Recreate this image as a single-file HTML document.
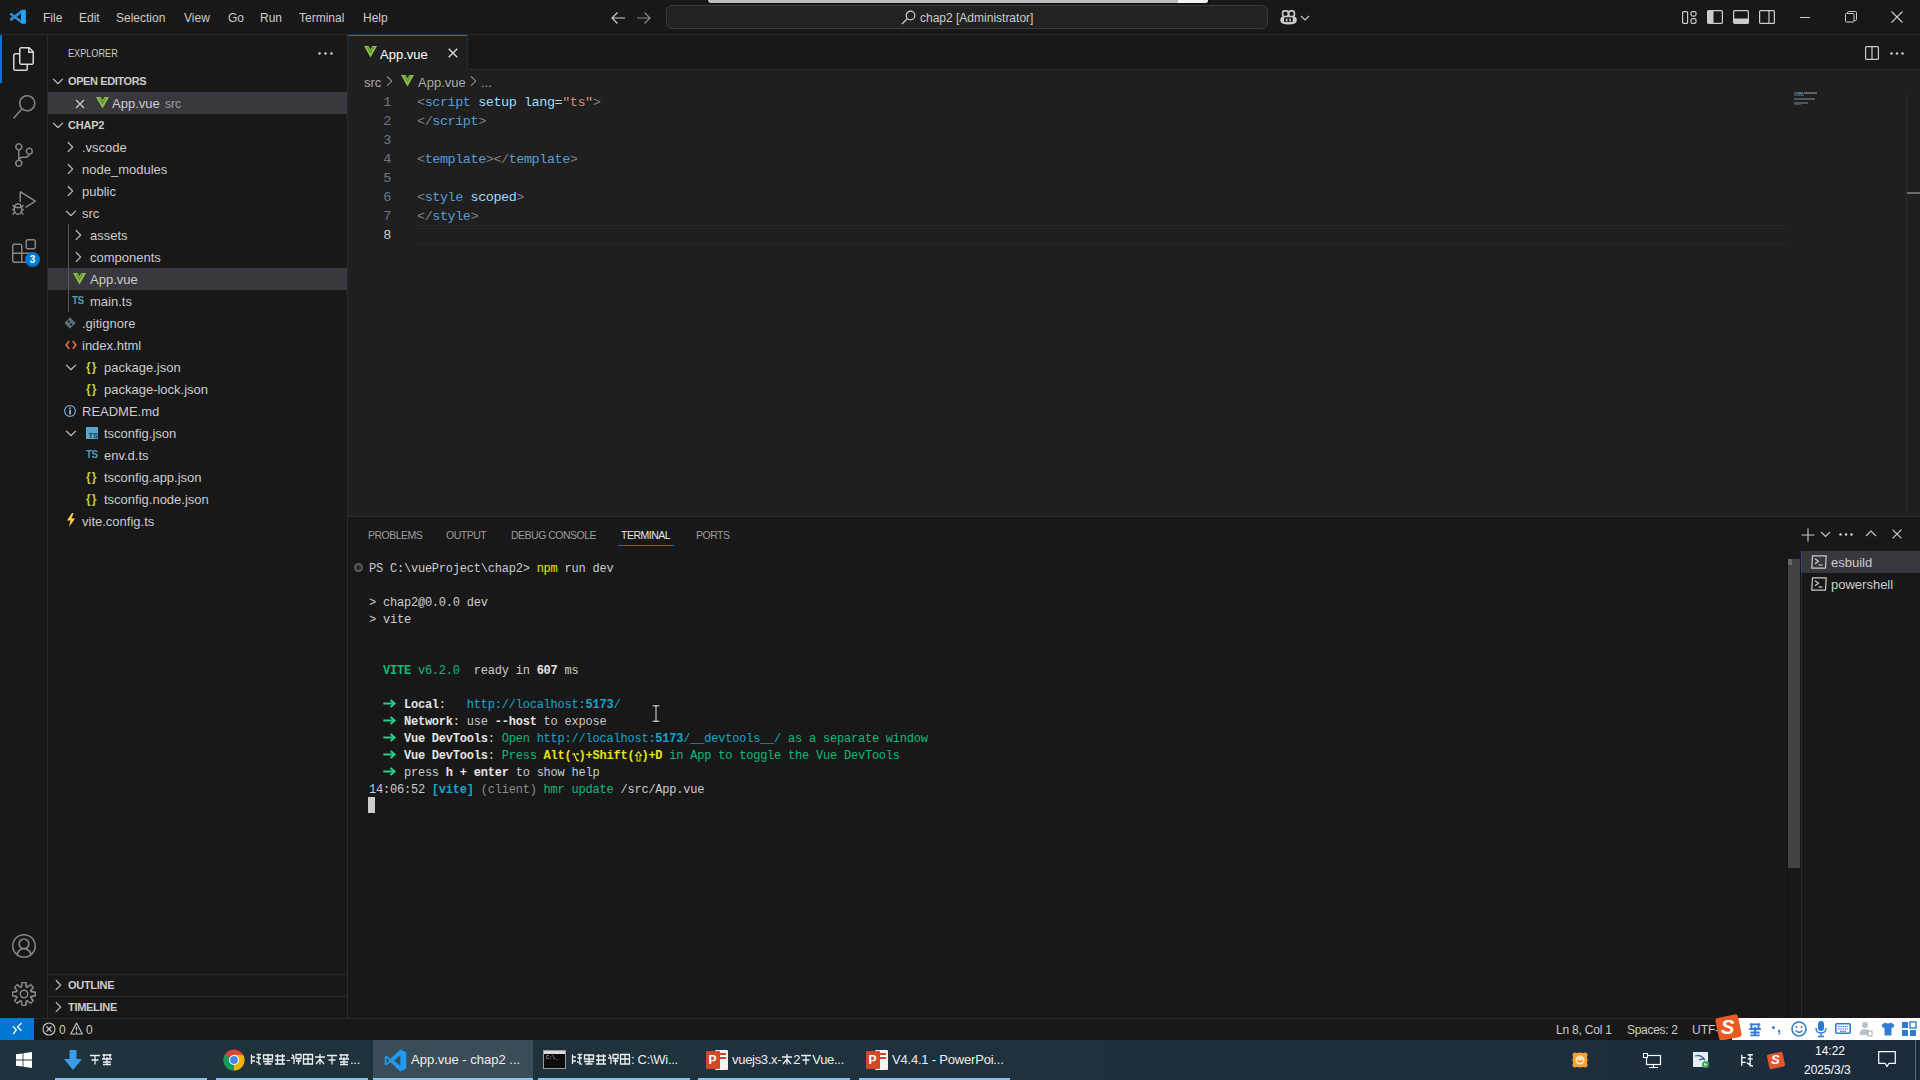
<!DOCTYPE html>
<html><head><meta charset="utf-8">
<style>
*{margin:0;padding:0;box-sizing:border-box}
html,body{width:1920px;height:1080px;overflow:hidden;background:#181818}
body{position:relative;font-family:"Liberation Sans",sans-serif;font-size:13px;color:#cccccc}
.a{position:absolute}
.t{position:absolute;white-space:nowrap;line-height:1}
.mono{font-family:"Liberation Mono",monospace}
svg{position:absolute;overflow:visible}
i.k{display:inline-block;width:6.99px;font-style:normal}
i.m{display:inline-block;width:7.65px;font-style:normal}
</style></head><body>

<!-- TITLE BAR -->
<div class="a" style="left:0;top:0;width:1920px;height:34px;background:#181818"></div>
<div class="a" style="left:0;top:34px;width:1920px;height:1px;background:#2b2b2b"></div>


<!-- vscode logo -->
<svg style="left:0;top:0" width="30" height="30" viewBox="0 0 30 30">
<path d="M22.5 10.8 L11.2 19.4" stroke="#2a8fd8" stroke-width="2.6" stroke-linecap="round"/>
<path d="M22.5 22.8 L11.2 14.2" stroke="#2a8fd8" stroke-width="2.6" stroke-linecap="round"/>
<path d="M21 11 L24.5 9.6 Q25.9 9.8 25.9 11 V22.6 Q25.9 23.9 24.5 24 L21 22.6 Z" fill="#1fa5f8"/>
</svg>
<div class="t" style="left:43px;top:12px;font-size:12px;color:#cccccc">File</div>
<div class="t" style="left:79px;top:12px;font-size:12px;color:#cccccc">Edit</div>
<div class="t" style="left:116px;top:12px;font-size:12px;color:#cccccc">Selection</div>
<div class="t" style="left:184px;top:12px;font-size:12px;color:#cccccc">View</div>
<div class="t" style="left:228px;top:12px;font-size:12px;color:#cccccc">Go</div>
<div class="t" style="left:260px;top:12px;font-size:12px;color:#cccccc">Run</div>
<div class="t" style="left:299px;top:12px;font-size:12px;color:#cccccc">Terminal</div>
<div class="t" style="left:363px;top:12px;font-size:12px;color:#cccccc">Help</div>
<!-- nav arrows -->
<svg style="left:610px;top:11px" width="16" height="14" viewBox="0 0 16 14"><path d="M15 7 H2 M7.5 1.5 L2 7 L7.5 12.5" stroke="#cccccc" stroke-width="1.2" fill="none"/></svg>
<svg style="left:636px;top:11px" width="16" height="14" viewBox="0 0 16 14"><path d="M1 7 H14 M8.5 1.5 L14 7 L8.5 12.5" stroke="#8a8a8a" stroke-width="1.2" fill="none"/></svg>
<!-- command center -->
<div class="a" style="left:666px;top:5px;width:602px;height:24px;background:#222222;border:1px solid #3a3a3a;border-radius:6px"></div>
<svg style="left:901px;top:10px" width="15" height="15" viewBox="0 0 15 15"><circle cx="9.5" cy="5.5" r="4.3" stroke="#cccccc" stroke-width="1.2" fill="none"/><path d="M6.5 8.5 L1 14" stroke="#cccccc" stroke-width="1.3"/></svg>
<div class="t" style="left:920px;top:12px;font-size:12px;color:#cccccc">chap2 [Administrator]</div>
<!-- white bar at top -->
<div class="a" style="left:706px;top:0;width:504px;height:4px;background:#111;border-radius:0 0 5px 5px"></div>
<div class="a" style="left:708px;top:0;width:500px;height:2.5px;background:#bdbdbd;border-radius:0 0 4px 4px"></div>
<div class="a" style="left:1178px;top:0;width:30px;height:2.5px;background:#f2f2f2;border-radius:0 0 4px 0"></div>
<!-- copilot -->
<svg style="left:1280px;top:9.6px" width="17" height="15" viewBox="0 0 17 15">
<path d="M0.3 10.2 Q0.3 6.3 4 6.3 H13 Q16.8 6.3 16.8 10.2 Q16.8 14.6 8.5 14.6 Q0.3 14.6 0.3 10.2 Z" fill="#cccccc"/>
<rect x="2.6" y="0.9" width="5.6" height="5.6" rx="2" stroke="#cccccc" stroke-width="1.6" fill="#181818"/>
<rect x="8.8" y="0.9" width="5.6" height="5.6" rx="2" stroke="#cccccc" stroke-width="1.6" fill="#181818"/>
<rect x="4" y="7.2" width="8.8" height="4.9" rx="1.2" fill="#181818"/>
<rect x="5.9" y="8.6" width="1.6" height="2.8" fill="#cccccc"/><rect x="9.2" y="8.6" width="1.6" height="2.8" fill="#cccccc"/>
</svg>
<svg style="left:1300px;top:14.5px" width="10" height="6" viewBox="0 0 10 6"><path d="M1 1 L5 5 L9 1" stroke="#cccccc" stroke-width="1.1" fill="none"/></svg>
<!-- layout icons -->
<svg style="left:1682px;top:11px" width="15" height="13" viewBox="0 0 15 13"><rect x="0.6" y="0.6" width="5" height="11.8" rx="1" stroke="#cccccc" stroke-width="1.2" fill="none"/><rect x="9" y="0.6" width="5" height="4.5" rx="1.5" stroke="#cccccc" stroke-width="1.2" fill="none"/><rect x="9" y="7.7" width="5" height="4.7" rx="1.5" stroke="#cccccc" stroke-width="1.2" fill="none"/></svg>
<svg style="left:1707px;top:10px" width="16" height="14" viewBox="0 0 16 14"><rect x="0.6" y="0.6" width="14.8" height="12.8" rx="1" stroke="#cccccc" stroke-width="1.2" fill="none"/><rect x="1" y="1" width="5.5" height="12" fill="#cccccc"/></svg>
<svg style="left:1733px;top:10px" width="16" height="14" viewBox="0 0 16 14"><rect x="0.6" y="0.6" width="14.8" height="12.8" rx="1" stroke="#cccccc" stroke-width="1.2" fill="none"/><rect x="1" y="8.5" width="14" height="4.5" fill="#cccccc"/></svg>
<svg style="left:1759px;top:10px" width="16" height="14" viewBox="0 0 16 14"><rect x="0.6" y="0.6" width="14.8" height="12.8" rx="1" stroke="#cccccc" stroke-width="1.2" fill="none"/><path d="M10 1 V13" stroke="#cccccc" stroke-width="1.2"/></svg>
<!-- window controls -->
<div class="a" style="left:1800px;top:17px;width:10px;height:1px;background:#cccccc"></div>
<svg style="left:1845px;top:11px" width="12" height="12" viewBox="0 0 12 12"><rect x="0.5" y="2.5" width="8.5" height="8.5" rx="1" stroke="#cccccc" stroke-width="1" fill="none"/><path d="M2.5 2.5 V1.5 Q2.5 0.5 3.5 0.5 H10.5 Q11.5 0.5 11.5 1.5 V8.5 Q11.5 9.5 10.5 9.5 H9" stroke="#cccccc" stroke-width="1" fill="none"/></svg>
<svg style="left:1891px;top:11px" width="12" height="12" viewBox="0 0 12 12"><path d="M0.5 0.5 L11.5 11.5 M11.5 0.5 L0.5 11.5" stroke="#cccccc" stroke-width="1.1"/></svg>

<!-- ACTIVITY BAR -->
<div class="a" style="left:0;top:35px;width:47px;height:983px;background:#181818"></div>
<div class="a" style="left:47px;top:35px;width:1px;height:983px;background:#2b2b2b"></div>


<div class="a" style="left:0;top:35px;width:2px;height:48px;background:#0078d4"></div>
<svg style="left:12px;top:47px" width="24" height="24" viewBox="0 0 24 24"><path fill="#d7d7d7" d="M17.5 0h-9L7 1.5V6H2.5L1 7.5v15.07L2.5 24h12.07L16 22.57V18h4.7l1.3-1.43V4.5L17.5 0zm0 2.12l2.38 2.38H17.5V2.12zm-3 20.38h-12v-15H7v9.07L8.5 18h6v4.5zm6-6h-12v-15H16V6h4.5v10.5z"/></svg>
<svg style="left:12px;top:95px" width="24" height="24" viewBox="0 0 24 24"><path fill="#868686" d="M15.25 0a8.25 8.25 0 0 0-6.18 13.72L1 22.88l1.12 1 8.05-9.12A8.251 8.251 0 1 0 15.25.01V0zm0 15a6.750 6.75 0 1 1 0-13.5 6.75 6.75 0 0 1 0 13.5z"/></svg>
<svg style="left:12px;top:143px" width="24" height="24" viewBox="0 0 24 24"><path fill="#868686" d="M21.007 8.222A3.738 3.738 0 0 0 15.045 5.2a3.737 3.737 0 0 0 1.156 6.583 2.988 2.988 0 0 1-2.668 1.67h-2.99a4.456 4.456 0 0 0-2.989 1.165V7.4a3.737 3.737 0 1 0-1.494 0v9.117a3.776 3.776 0 1 0 1.816.099 2.99 2.99 0 0 1 2.668-1.667h2.99a4.484 4.484 0 0 0 4.223-3.039 3.736 3.736 0 0 0 3.25-3.687zM4.565 3.738a2.242 2.242 0 1 1 4.484 0 2.242 2.242 0 0 1-4.484 0zm4.484 16.441a2.242 2.242 0 1 1-4.484 0 2.242 2.242 0 0 1 4.484 0zm8.221-9.715a2.242 2.242 0 1 1 0-4.485 2.242 2.242 0 0 1 0 4.485z"/></svg>
<svg style="left:12px;top:191px" width="24" height="24" viewBox="0 0 24 24"><path fill="#868686" d="M10.94 13.5l-1.32 1.320a3.730 3.73 0 0 0-7.24 0L1.06 13.5 0 14.56l1.72 1.72-.22.22V18H0v1.5h1.5v.08c.077.489.214.966.41 1.42L0 22.94 1.060 24l1.65-1.65A4.308 4.308 0 0 0 6 24a4.31 4.31 0 0 0 3.29-1.65L10.94 24 12 22.94 10.09 21c.198-.464.336-.951.41-1.45v-.07H12V18h-1.5v-1.5l-.22-.22L12 14.56l-1.06-1.060zM6 13.5a2.25 2.25 0 0 1 2.25 2.25h-4.5A2.25 2.25 0 0 1 6 13.5zm3 6a3.33 3.33 0 0 1-3 3 3.33 3.33 0 0 1-3-3v-2.25h6v2.25zm14.76-9.9v1.26L13.5 17.37V15.6l8.5-5.37L9 2v9.46a5.07 5.07 0 0 0-1.5-.72V.63L8.64 0l15.12 9.6z"/></svg>
<svg style="left:12px;top:239px" width="24" height="24" viewBox="0 0 24 24"><path fill="#868686" d="M13.5 1.5L15 0h7.5L24 1.5V9l-1.5 1.5H15L13.5 9V1.5zm1.5 0V9h7.5V1.5H15zM0 15V6l1.5-1.5H9L10.5 6v7.5H18l1.5 1.5v7.5L18 24H1.5L0 22.5V15zm9-1.5V6H1.5v7.5H9zM9 15H1.5v7.5H9V15zm1.5 7.5H18V15h-7.5v7.5z"/></svg>
<div class="a" style="left:25px;top:252px;width:15px;height:15px;border-radius:50%;background:#0078d4"></div>
<div class="t" style="left:25px;top:255px;width:15px;text-align:center;font-size:10px;font-weight:bold;color:#fff">3</div>
<svg style="left:12px;top:934px" width="24" height="24" viewBox="0 0 16 16"><path fill="#868686" d="M16 7.992C16 3.58 12.416 0 8 0S0 3.58 0 7.992c0 2.43 1.104 4.62 2.832 6.09.016.016.032.016.032.032.144.112.288.224.448.336.08.048.144.111.224.175A7.98 7.98 0 0 0 8.016 16a7.98 7.98 0 0 0 4.48-1.375c.08-.048.144-.111.224-.16.144-.111.304-.223.448-.335.016-.016.032-.016.032-.032 1.696-1.487 2.8-3.676 2.8-6.106zm-8 7.001c-1.504 0-2.88-.48-4.016-1.279.016-.128.048-.255.08-.383a4.170 4.17 0 0 1 .416-.991c.176-.304.384-.576.64-.816.24-.24.528-.463.816-.639.304-.176.624-.304.976-.4A4.15 4.15 0 0 1 8 10.342a4.185 4.185 0 0 1 2.928 1.166c.368.368.656.8.864 1.295.112.288.192.592.24.911A7.03 7.03 0 0 1 8 14.993zm-2.448-7.4a2.49 2.49 0 0 1-.208-1.024c0-.351.064-.703.208-1.023.144-.32.336-.607.576-.847.24-.24.528-.431.848-.575.32-.144.672-.208 1.024-.208.368 0 .704.064 1.024.208.32.144.608.336.848.575.24.24.432.528.576.847.144.32.208.672.208 1.023 0 .368-.064.704-.208 1.023a2.84 2.84 0 0 1-.576.848 2.84 2.84 0 0 1-.848.575 2.715 2.715 0 0 1-2.064 0 2.84 2.84 0 0 1-.848-.575 2.526 2.526 0 0 1-.56-.848zm7.424 5.306c0-.032-.016-.048-.016-.08a5.22 5.22 0 0 0-.688-1.406 4.883 4.883 0 0 0-1.088-1.135 5.207 5.207 0 0 0-1.04-.608 2.82 2.82 0 0 0 .464-.383 4.2 4.2 0 0 0 .624-.784 3.624 3.624 0 0 0 .528-1.934 3.71 3.71 0 0 0-.288-1.47 3.799 3.799 0 0 0-.816-1.199 3.845 3.845 0 0 0-1.2-.8 3.72 3.72 0 0 0-1.472-.287 3.72 3.72 0 0 0-1.472.288 3.631 3.631 0 0 0-1.2.815 3.84 3.84 0 0 0-.8 1.199 3.71 3.71 0 0 0-.288 1.47c0 .352.048.688.144 1.007.096.336.224.64.4.927.16.288.384.544.624.784.144.144.304.271.48.383a5.12 5.12 0 0 0-1.04.624c-.416.32-.784.703-1.088 1.119a4.999 4.999 0 0 0-.688 1.406c-.016.032-.016.064-.016.08C1.776 11.636.992 9.91.992 7.992.992 4.14 4.144.991 8 .991s7.008 3.149 7.008 7.001a6.96 6.960 0 0 1-2.032 4.907z"/></svg>
<svg style="left:12px;top:982px" width="24" height="24" viewBox="0 0 24 24"><path fill="#868686" d="M19.85 8.75l4.15.83v4.84l-4.15.83 2.35 3.52-3.43 3.43-3.520-2.35-.83 4.150H9.58l-.83-4.15-3.52 2.35-3.43-3.43 2.35-3.52L0 14.42V9.58l4.15-.83L1.8 5.23 5.23 1.8l3.52 2.35L9.58 0h4.84l.83 4.15 3.52-2.35 3.43 3.43-2.35 3.52zm-1.57 5.07l4.22-.84v-1.96l-4.22-.84-.6-1.46 2.39-3.58-1.38-1.39-3.59 2.39-1.46-.6-.84-4.22h-1.96l-.84 4.22-1.46.6-3.58-2.39-1.39 1.39 2.39 3.58-.6 1.46-4.22.84v1.96l4.22.84.6 1.46-2.39 3.58 1.39 1.39 3.58-2.39 1.46.6.84 4.22h1.96l.84-4.22 1.46-.6 3.58 2.39 1.39-1.39-2.39-3.58.6-1.46zM12 7.5a4.5 4.5 0 1 1 0 9 4.5 4.5 0 0 1 0-9zm0 1.5a3 3 0 1 0 0 6 3 3 0 0 0 0-6z"/></svg>

<!-- SIDEBAR -->
<div class="a" style="left:48px;top:35px;width:299px;height:983px;background:#181818"></div>
<div class="a" style="left:347px;top:35px;width:1px;height:983px;background:#2b2b2b"></div>

<div class="t" style="left:68px;top:48px;font-size:11px;color:#cccccc;transform:scaleX(0.83);transform-origin:0 0">EXPLORER</div>
<svg style="left:318px;top:52px" width="15" height="3" viewBox="0 0 15 3"><circle cx="1.5" cy="1.5" r="1.3" fill="#cccccc"/><circle cx="7.5" cy="1.5" r="1.3" fill="#cccccc"/><circle cx="13.5" cy="1.5" r="1.3" fill="#cccccc"/></svg>
<svg style="left:50.0px;top:72.7px" width="16" height="16" viewBox="0 0 16 16"><path fill="#c5c5c5" stroke="#c5c5c5" stroke-width="0.45" d="M7.976 10.072l4.357-4.357.62.618L8.284 11h-.618L3 6.333l.619-.618 4.357 4.357z"/></svg>
<div class="t" style="left:68px;top:76px;font-size:11px;font-weight:bold;color:#cccccc;letter-spacing:-0.4px">OPEN EDITORS</div>
<div class="a" style="left:48px;top:92px;width:299px;height:22px;background:#37373d"></div>
<svg style="left:75px;top:98.5px" width="10" height="10" viewBox="0 0 10 10"><path d="M1 1 L9 9 M9 1 L1 9" stroke="#cccccc" stroke-width="1.2"/></svg>
<svg style="left:96px;top:97px" width="13" height="12" viewBox="0 0 13 12"><path d="M0 0 H4.6 L6.5 3.2 L8.4 0 H13 L6.5 11.5 Z" fill="#8dc149"/><path d="M2.6 0.9 H4.1 L6.5 5 L8.9 0.9 H10.4 L6.5 7.8 Z" fill="#5e8f2c"/></svg>
<div class="t" style="left:112px;top:97px;font-size:13px;color:#cccccc;">App.vue</div>
<div class="t" style="left:165px;top:97px;font-size:12px;color:#a0a0a0;top:98px">src</div>
<svg style="left:50.0px;top:116.7px" width="16" height="16" viewBox="0 0 16 16"><path fill="#c5c5c5" stroke="#c5c5c5" stroke-width="0.45" d="M7.976 10.072l4.357-4.357.62.618L8.284 11h-.618L3 6.333l.619-.618 4.357 4.357z"/></svg>
<div class="t" style="left:68px;top:120px;font-size:11px;font-weight:bold;color:#cccccc;letter-spacing:-0.2px">CHAP2</div>
<svg style="left:61.8px;top:139.0px" width="16" height="16" viewBox="0 0 16 16"><path fill="#c5c5c5" stroke="#c5c5c5" stroke-width="0.45" d="M10.072 8.024L5.715 3.667l.618-.62L11 7.716v.618L6.333 13l-.618-.619 4.357-4.357z"/></svg>
<div class="t" style="left:82px;top:141px;font-size:13px;color:#cccccc;">.vscode</div>
<svg style="left:61.8px;top:161.0px" width="16" height="16" viewBox="0 0 16 16"><path fill="#c5c5c5" stroke="#c5c5c5" stroke-width="0.45" d="M10.072 8.024L5.715 3.667l.618-.62L11 7.716v.618L6.333 13l-.618-.619 4.357-4.357z"/></svg>
<div class="t" style="left:82px;top:163px;font-size:13px;color:#cccccc;">node_modules</div>
<svg style="left:61.8px;top:183.0px" width="16" height="16" viewBox="0 0 16 16"><path fill="#c5c5c5" stroke="#c5c5c5" stroke-width="0.45" d="M10.072 8.024L5.715 3.667l.618-.62L11 7.716v.618L6.333 13l-.618-.619 4.357-4.357z"/></svg>
<div class="t" style="left:82px;top:185px;font-size:13px;color:#cccccc;">public</div>
<svg style="left:63.0px;top:204.7px" width="16" height="16" viewBox="0 0 16 16"><path fill="#c5c5c5" stroke="#c5c5c5" stroke-width="0.45" d="M7.976 10.072l4.357-4.357.62.618L8.284 11h-.618L3 6.333l.619-.618 4.357 4.357z"/></svg>
<div class="t" style="left:82px;top:207px;font-size:13px;color:#cccccc;">src</div>
<div class="a" style="left:68px;top:224px;width:1px;height:88px;background:#585858"></div>
<svg style="left:70.3px;top:227.0px" width="16" height="16" viewBox="0 0 16 16"><path fill="#c5c5c5" stroke="#c5c5c5" stroke-width="0.45" d="M10.072 8.024L5.715 3.667l.618-.62L11 7.716v.618L6.333 13l-.618-.619 4.357-4.357z"/></svg>
<div class="t" style="left:90px;top:229px;font-size:13px;color:#cccccc;">assets</div>
<svg style="left:70.3px;top:249.0px" width="16" height="16" viewBox="0 0 16 16"><path fill="#c5c5c5" stroke="#c5c5c5" stroke-width="0.45" d="M10.072 8.024L5.715 3.667l.618-.62L11 7.716v.618L6.333 13l-.618-.619 4.357-4.357z"/></svg>
<div class="t" style="left:90px;top:251px;font-size:13px;color:#cccccc;">components</div>
<div class="a" style="left:48px;top:268px;width:299px;height:22px;background:#37373d"></div>
<div class="a" style="left:68px;top:268px;width:1px;height:22px;background:#585858"></div>
<svg style="left:73px;top:273px" width="13" height="12" viewBox="0 0 13 12"><path d="M0 0 H4.6 L6.5 3.2 L8.4 0 H13 L6.5 11.5 Z" fill="#8dc149"/><path d="M2.6 0.9 H4.1 L6.5 5 L8.9 0.9 H10.4 L6.5 7.8 Z" fill="#5e8f2c"/></svg>
<div class="t" style="left:90px;top:273px;font-size:13px;color:#cccccc;">App.vue</div>
<div class="t" style="left:72px;top:296px;font-size:10px;font-weight:bold;color:#519aba;letter-spacing:-0.5px">TS</div>
<div class="t" style="left:90px;top:295px;font-size:13px;color:#cccccc;">main.ts</div>
<svg style="left:64px;top:317px" width="12" height="12" viewBox="0 0 12 12"><path d="M6 0.3 L11.7 6 L6 11.7 L0.3 6 Z" fill="#5d6f78"/><circle cx="4.8" cy="4.6" r="1.1" fill="#181818"/><circle cx="7.2" cy="7.4" r="1.1" fill="#181818"/></svg>
<div class="t" style="left:82px;top:317px;font-size:13px;color:#cccccc;">.gitignore</div>
<svg style="left:65px;top:339.5px" width="12" height="10" viewBox="0 0 12 10"><path d="M4.2 1 L1.2 5 L4.2 9 M7.8 1 L10.8 5 L7.8 9" stroke="#e8623e" stroke-width="1.8" fill="none"/></svg>
<div class="t" style="left:82px;top:339px;font-size:13px;color:#cccccc;">index.html</div>
<svg style="left:63.0px;top:358.6px" width="16" height="16" viewBox="0 0 16 16"><path fill="#c5c5c5" stroke="#c5c5c5" stroke-width="0.45" d="M7.976 10.072l4.357-4.357.62.618L8.284 11h-.618L3 6.333l.619-.618 4.357 4.357z"/></svg>
<div class="t" style="left:86px;top:361px;font-size:12px;font-weight:bold;color:#cbcb41;letter-spacing:1px">{}</div>
<div class="t" style="left:104px;top:361px;font-size:13px;color:#cccccc;">package.json</div>
<div class="t" style="left:86px;top:383px;font-size:12px;font-weight:bold;color:#cbcb41;letter-spacing:1px">{}</div>
<div class="t" style="left:104px;top:383px;font-size:13px;color:#cccccc;">package-lock.json</div>
<svg style="left:64px;top:405px" width="12" height="12" viewBox="0 0 12 12"><circle cx="6" cy="6" r="5.4" stroke="#7aa8cc" stroke-width="1.2" fill="none"/><rect x="5" y="4.8" width="2" height="4.6" fill="#7aa8cc"/><circle cx="6" cy="3.2" r="1" fill="#7aa8cc"/></svg>
<div class="t" style="left:82px;top:405px;font-size:13px;color:#cccccc;">README.md</div>
<svg style="left:63.0px;top:424.6px" width="16" height="16" viewBox="0 0 16 16"><path fill="#c5c5c5" stroke="#c5c5c5" stroke-width="0.45" d="M7.976 10.072l4.357-4.357.62.618L8.284 11h-.618L3 6.333l.619-.618 4.357 4.357z"/></svg>
<div class="a" style="left:86px;top:427px;width:12px;height:12px;background:#5aa3cc"></div><div class="t" style="left:88.5px;top:431.5px;font-size:7.5px;font-weight:bold;color:#15364c">TS</div>
<div class="t" style="left:104px;top:427px;font-size:13px;color:#cccccc;">tsconfig.json</div>
<div class="t" style="left:86px;top:450px;font-size:10px;font-weight:bold;color:#519aba;letter-spacing:-0.5px">TS</div>
<div class="t" style="left:104px;top:449px;font-size:13px;color:#cccccc;">env.d.ts</div>
<div class="t" style="left:86px;top:471px;font-size:12px;font-weight:bold;color:#cbcb41;letter-spacing:1px">{}</div>
<div class="t" style="left:104px;top:471px;font-size:13px;color:#cccccc;">tsconfig.app.json</div>
<div class="t" style="left:86px;top:493px;font-size:12px;font-weight:bold;color:#cbcb41;letter-spacing:1px">{}</div>
<div class="t" style="left:104px;top:493px;font-size:13px;color:#cccccc;">tsconfig.node.json</div>
<svg style="left:66px;top:513px" width="10" height="14" viewBox="0 0 10 14"><path d="M6 0 L1 7.5 H4.5 L3 14 L9 5.5 H5.5 L7.5 0 Z" fill="#ffd62e"/></svg>
<div class="t" style="left:82px;top:515px;font-size:13px;color:#cccccc;">vite.config.ts</div>
<div class="a" style="left:48px;top:974px;width:299px;height:1px;background:#2b2b2b"></div>
<svg style="left:49.8px;top:977.0px" width="16" height="16" viewBox="0 0 16 16"><path fill="#c5c5c5" stroke="#c5c5c5" stroke-width="0.45" d="M10.072 8.024L5.715 3.667l.618-.62L11 7.716v.618L6.333 13l-.618-.619 4.357-4.357z"/></svg>
<div class="t" style="left:68px;top:980px;font-size:11px;font-weight:bold;color:#cccccc;letter-spacing:-0.3px">OUTLINE</div>
<div class="a" style="left:48px;top:996px;width:299px;height:1px;background:#2b2b2b"></div>
<svg style="left:49.8px;top:999.0px" width="16" height="16" viewBox="0 0 16 16"><path fill="#c5c5c5" stroke="#c5c5c5" stroke-width="0.45" d="M10.072 8.024L5.715 3.667l.618-.62L11 7.716v.618L6.333 13l-.618-.619 4.357-4.357z"/></svg>
<div class="t" style="left:68px;top:1002px;font-size:11px;font-weight:bold;color:#cccccc;letter-spacing:-0.3px">TIMELINE</div>

<!-- EDITOR -->
<div class="a" style="left:348px;top:35px;width:1572px;height:35px;background:#181818"></div>
<div class="a" style="left:348px;top:70px;width:1572px;height:446px;background:#1f1f1f"></div>

<div class="a" style="left:348px;top:35px;width:119px;height:35px;background:#1f1f1f"></div>
<div class="a" style="left:348px;top:35px;width:119px;height:1px;background:#0078d4"></div>
<div class="a" style="left:467px;top:35px;width:1px;height:34px;background:#2b2b2b"></div>
<div class="a" style="left:468px;top:69px;width:1452px;height:1px;background:#2b2b2b"></div>
<svg style="left:364px;top:46px" width="13" height="12" viewBox="0 0 13 12"><path d="M0 0 H4.6 L6.5 3.2 L8.4 0 H13 L6.5 11.5 Z" fill="#8dc149"/><path d="M2.6 0.9 H4.1 L6.5 5 L8.9 0.9 H10.4 L6.5 7.8 Z" fill="#5e8f2c"/></svg>
<div class="t" style="left:380px;top:48px;font-size:13px;color:#ffffff">App.vue</div>
<svg style="left:448px;top:48px" width="10" height="10" viewBox="0 0 10 10"><path d="M0.7 0.7 L9.3 9.3 M9.3 0.7 L0.7 9.3" stroke="#e0e0e0" stroke-width="1.3"/></svg>
<svg style="left:1865px;top:46px" width="14" height="14" viewBox="0 0 14 14"><rect x="0.6" y="0.6" width="12.8" height="12.8" rx="1" stroke="#cccccc" stroke-width="1.2" fill="none"/><path d="M7 1 V13" stroke="#cccccc" stroke-width="1.2"/></svg>
<svg style="left:1890px;top:51.5px" width="14" height="3" viewBox="0 0 14 3"><circle cx="1.5" cy="1.5" r="1.3" fill="#cccccc"/><circle cx="7" cy="1.5" r="1.3" fill="#cccccc"/><circle cx="12.5" cy="1.5" r="1.3" fill="#cccccc"/></svg>
<div class="t" style="left:364px;top:75.5px;font-size:13px;color:#a9a9a9">src</div>
<svg style="left:380.5px;top:73px" width="16" height="16" viewBox="0 0 16 16"><path fill="#a9a9a9" d="M10.072 8.024L5.715 3.667l.618-.62L11 7.716v.618L6.333 13l-.618-.619 4.357-4.357z"/></svg>
<svg style="left:401px;top:75px" width="13" height="12" viewBox="0 0 13 12"><path d="M0 0 H4.6 L6.5 3.2 L8.4 0 H13 L6.5 11.5 Z" fill="#8dc149"/><path d="M2.6 0.9 H4.1 L6.5 5 L8.9 0.9 H10.4 L6.5 7.8 Z" fill="#5e8f2c"/></svg>
<div class="t" style="left:418px;top:75.5px;font-size:13px;color:#a9a9a9">App.vue</div>
<svg style="left:464.5px;top:73px" width="16" height="16" viewBox="0 0 16 16"><path fill="#a9a9a9" d="M10.072 8.024L5.715 3.667l.618-.62L11 7.716v.618L6.333 13l-.618-.619 4.357-4.357z"/></svg>
<div class="t" style="left:481px;top:75.5px;font-size:13px;color:#a9a9a9">...</div>
<div class="a" style="left:416px;top:225px;width:1372px;height:19px;border:1px solid #282828;border-width:1px 0"></div>
<div class="a mono" style="left:360px;top:93px;width:31px;height:19px;line-height:19px;font-size:13.5px;letter-spacing:-0.45px;text-align:right;color:#6e7681;white-space:pre">1</div>
<div class="a mono" style="left:360px;top:112px;width:31px;height:19px;line-height:19px;font-size:13.5px;letter-spacing:-0.45px;text-align:right;color:#6e7681;white-space:pre">2</div>
<div class="a mono" style="left:360px;top:131px;width:31px;height:19px;line-height:19px;font-size:13.5px;letter-spacing:-0.45px;text-align:right;color:#6e7681;white-space:pre">3</div>
<div class="a mono" style="left:360px;top:150px;width:31px;height:19px;line-height:19px;font-size:13.5px;letter-spacing:-0.45px;text-align:right;color:#6e7681;white-space:pre">4</div>
<div class="a mono" style="left:360px;top:169px;width:31px;height:19px;line-height:19px;font-size:13.5px;letter-spacing:-0.45px;text-align:right;color:#6e7681;white-space:pre">5</div>
<div class="a mono" style="left:360px;top:188px;width:31px;height:19px;line-height:19px;font-size:13.5px;letter-spacing:-0.45px;text-align:right;color:#6e7681;white-space:pre">6</div>
<div class="a mono" style="left:360px;top:207px;width:31px;height:19px;line-height:19px;font-size:13.5px;letter-spacing:-0.45px;text-align:right;color:#6e7681;white-space:pre">7</div>
<div class="a mono" style="left:417px;top:93px;height:19px;line-height:19px;font-size:13.5px;color:#cccccc;white-space:pre"><span style="color:#808080"><i class="m">&lt;</i></span><span style="color:#569cd6"><i class="m">s</i><i class="m">c</i><i class="m">r</i><i class="m">i</i><i class="m">p</i><i class="m">t</i></span><span style="color:#cccccc"><i class="m"> </i></span><span style="color:#9cdcfe"><i class="m">s</i><i class="m">e</i><i class="m">t</i><i class="m">u</i><i class="m">p</i></span><span style="color:#cccccc"><i class="m"> </i></span><span style="color:#9cdcfe"><i class="m">l</i><i class="m">a</i><i class="m">n</i><i class="m">g</i></span><span style="color:#cccccc"><i class="m">=</i></span><span style="color:#ce9178"><i class="m">&quot;</i><i class="m">t</i><i class="m">s</i><i class="m">&quot;</i></span><span style="color:#808080"><i class="m">&gt;</i></span></div>
<div class="a mono" style="left:417px;top:112px;height:19px;line-height:19px;font-size:13.5px;color:#cccccc;white-space:pre"><span style="color:#808080"><i class="m">&lt;</i><i class="m">/</i></span><span style="color:#569cd6"><i class="m">s</i><i class="m">c</i><i class="m">r</i><i class="m">i</i><i class="m">p</i><i class="m">t</i></span><span style="color:#808080"><i class="m">&gt;</i></span></div>
<div class="a mono" style="left:417px;top:150px;height:19px;line-height:19px;font-size:13.5px;color:#cccccc;white-space:pre"><span style="color:#808080"><i class="m">&lt;</i></span><span style="color:#569cd6"><i class="m">t</i><i class="m">e</i><i class="m">m</i><i class="m">p</i><i class="m">l</i><i class="m">a</i><i class="m">t</i><i class="m">e</i></span><span style="color:#808080"><i class="m">&gt;</i><i class="m">&lt;</i><i class="m">/</i></span><span style="color:#569cd6"><i class="m">t</i><i class="m">e</i><i class="m">m</i><i class="m">p</i><i class="m">l</i><i class="m">a</i><i class="m">t</i><i class="m">e</i></span><span style="color:#808080"><i class="m">&gt;</i></span></div>
<div class="a mono" style="left:417px;top:188px;height:19px;line-height:19px;font-size:13.5px;color:#cccccc;white-space:pre"><span style="color:#808080"><i class="m">&lt;</i></span><span style="color:#569cd6"><i class="m">s</i><i class="m">t</i><i class="m">y</i><i class="m">l</i><i class="m">e</i></span><span style="color:#cccccc"><i class="m"> </i></span><span style="color:#9cdcfe"><i class="m">s</i><i class="m">c</i><i class="m">o</i><i class="m">p</i><i class="m">e</i><i class="m">d</i></span><span style="color:#808080"><i class="m">&gt;</i></span></div>
<div class="a mono" style="left:417px;top:207px;height:19px;line-height:19px;font-size:13.5px;color:#cccccc;white-space:pre"><span style="color:#808080"><i class="m">&lt;</i><i class="m">/</i></span><span style="color:#569cd6"><i class="m">s</i><i class="m">t</i><i class="m">y</i><i class="m">l</i><i class="m">e</i></span><span style="color:#808080"><i class="m">&gt;</i></span></div>
<div class="a mono" style="left:360px;top:226px;width:31px;height:19px;line-height:19px;font-size:13.5px;letter-spacing:-0.45px;text-align:right;color:#cccccc;white-space:pre">8</div>
<div class="a" style="left:1794px;top:92px;width:4px;height:2px;background:#3f5266"></div>
<div class="a" style="left:1798px;top:92px;width:5px;height:2px;background:#5a6b7c"></div>
<div class="a" style="left:1804px;top:92px;width:13px;height:2px;background:#606468"></div>
<div class="a" style="left:1794px;top:94px;width:10px;height:2px;background:#3c4c5c"></div>
<div class="a" style="left:1794px;top:98px;width:21px;height:2px;background:#4e5862"></div>
<div class="a" style="left:1794px;top:102px;width:14px;height:2px;background:#4f5a60"></div>
<div class="a" style="left:1794px;top:104px;width:7px;height:1px;background:#3f4a52"></div>
<div class="a" style="left:1906px;top:92px;width:1px;height:424px;background:#2a2a2a"></div>
<div class="a" style="left:1907px;top:192px;width:13px;height:2px;background:#6a6a6a"></div>

<!-- PANEL -->
<div class="a" style="left:348px;top:516px;width:1572px;height:1px;background:#2b2b2b"></div>
<div class="a" style="left:348px;top:517px;width:1572px;height:501px;background:#181818"></div>

<div class="t" style="left:368px;top:530px;font-size:10.5px;letter-spacing:-0.5px;color:#9d9d9d">PROBLEMS</div>
<div class="t" style="left:446px;top:530px;font-size:10.5px;letter-spacing:-0.5px;color:#9d9d9d">OUTPUT</div>
<div class="t" style="left:511px;top:530px;font-size:10.5px;letter-spacing:-0.5px;color:#9d9d9d">DEBUG CONSOLE</div>
<div class="t" style="left:621px;top:530px;font-size:10.5px;letter-spacing:-0.5px;color:#e7e7e7">TERMINAL</div>
<div class="t" style="left:696px;top:530px;font-size:10.5px;letter-spacing:-0.5px;color:#9d9d9d">PORTS</div>
<div class="a" style="left:618px;top:545px;width:56px;height:1px;background:#0078d4"></div>
<svg style="left:1801px;top:528px" width="14" height="14" viewBox="0 0 14 14"><path d="M7 0.5 V13.5 M0.5 7 H13.5" stroke="#cccccc" stroke-width="1.1"/></svg>
<svg style="left:1820px;top:531px" width="11" height="7" viewBox="0 0 11 7"><path d="M1 1 L5.5 5.5 L10 1" stroke="#cccccc" stroke-width="1.1" fill="none"/></svg>
<svg style="left:1839px;top:533px" width="14" height="3" viewBox="0 0 14 3"><circle cx="1.5" cy="1.5" r="1.3" fill="#cccccc"/><circle cx="7" cy="1.5" r="1.3" fill="#cccccc"/><circle cx="12.5" cy="1.5" r="1.3" fill="#cccccc"/></svg>
<svg style="left:1865px;top:529.5px" width="12" height="7" viewBox="0 0 12 7"><path d="M1 6 L6 1 L11 6" stroke="#cccccc" stroke-width="1.1" fill="none"/></svg>
<svg style="left:1892px;top:529px" width="10" height="10" viewBox="0 0 10 10"><path d="M0.6 0.6 L9.4 9.4 M9.4 0.6 L0.6 9.4" stroke="#cccccc" stroke-width="1.2"/></svg>
<div class="a" style="left:354px;top:562.5px;width:9px;height:9px;border-radius:50%;border:2px solid #5a5a5a;background:#2a2a2a"></div>
<div class="a mono" style="left:369px;top:561px;height:17px;line-height:17px;font-size:12px;color:#cccccc;white-space:pre"><span style="color:#cccccc"><i class="k">P</i><i class="k">S</i><i class="k"> </i><i class="k">C</i><i class="k">:</i><i class="k">\</i><i class="k">v</i><i class="k">u</i><i class="k">e</i><i class="k">P</i><i class="k">r</i><i class="k">o</i><i class="k">j</i><i class="k">e</i><i class="k">c</i><i class="k">t</i><i class="k">\</i><i class="k">c</i><i class="k">h</i><i class="k">a</i><i class="k">p</i><i class="k">2</i><i class="k">&gt;</i><i class="k"> </i></span><span style="color:#e5e510"><i class="k">n</i><i class="k">p</i><i class="k">m</i></span><span style="color:#cccccc"><i class="k"> </i><i class="k">r</i><i class="k">u</i><i class="k">n</i><i class="k"> </i><i class="k">d</i><i class="k">e</i><i class="k">v</i></span></div>
<div class="a mono" style="left:369px;top:595px;height:17px;line-height:17px;font-size:12px;color:#cccccc;white-space:pre"><span style="color:#cccccc"><i class="k">&gt;</i><i class="k"> </i><i class="k">c</i><i class="k">h</i><i class="k">a</i><i class="k">p</i><i class="k">2</i><i class="k">@</i><i class="k">0</i><i class="k">.</i><i class="k">0</i><i class="k">.</i><i class="k">0</i><i class="k"> </i><i class="k">d</i><i class="k">e</i><i class="k">v</i></span></div>
<div class="a mono" style="left:369px;top:612px;height:17px;line-height:17px;font-size:12px;color:#cccccc;white-space:pre"><span style="color:#cccccc"><i class="k">&gt;</i><i class="k"> </i><i class="k">v</i><i class="k">i</i><i class="k">t</i><i class="k">e</i></span></div>
<div class="a mono" style="left:369px;top:663px;height:17px;line-height:17px;font-size:12px;color:#cccccc;white-space:pre"><span style="color:#cccccc"><i class="k"> </i><i class="k"> </i></span><span style="color:#0dbc79;font-weight:bold"><i class="k">V</i><i class="k">I</i><i class="k">T</i><i class="k">E</i></span><span style="color:#0dbc79"><i class="k"> </i><i class="k">v</i><i class="k">6</i><i class="k">.</i><i class="k">2</i><i class="k">.</i><i class="k">0</i></span><span style="color:#cccccc"><i class="k"> </i><i class="k"> </i><i class="k">r</i><i class="k">e</i><i class="k">a</i><i class="k">d</i><i class="k">y</i><i class="k"> </i><i class="k">i</i><i class="k">n</i><i class="k"> </i></span><span style="color:#e5e5e5;font-weight:bold"><i class="k">6</i><i class="k">0</i><i class="k">7</i></span><span style="color:#cccccc"><i class="k"> </i><i class="k">m</i><i class="k">s</i></span></div>
<div class="a mono" style="left:369px;top:697px;height:17px;line-height:17px;font-size:12px;color:#cccccc;white-space:pre"><span style="color:#cccccc"><i class="k"> </i><i class="k"> </i><i class="k"> </i><i class="k"> </i><i class="k"> </i></span><span style="color:#e5e5e5;font-weight:bold"><i class="k">L</i><i class="k">o</i><i class="k">c</i><i class="k">a</i><i class="k">l</i></span><span style="color:#cccccc"><i class="k">:</i><i class="k"> </i><i class="k"> </i><i class="k"> </i></span><span style="color:#11a8cd"><i class="k">h</i><i class="k">t</i><i class="k">t</i><i class="k">p</i><i class="k">:</i><i class="k">/</i><i class="k">/</i><i class="k">l</i><i class="k">o</i><i class="k">c</i><i class="k">a</i><i class="k">l</i><i class="k">h</i><i class="k">o</i><i class="k">s</i><i class="k">t</i><i class="k">:</i></span><span style="color:#11a8cd;font-weight:bold"><i class="k">5</i><i class="k">1</i><i class="k">7</i><i class="k">3</i></span><span style="color:#11a8cd"><i class="k">/</i></span></div>
<div class="a mono" style="left:369px;top:714px;height:17px;line-height:17px;font-size:12px;color:#cccccc;white-space:pre"><span style="color:#cccccc"><i class="k"> </i><i class="k"> </i><i class="k"> </i><i class="k"> </i><i class="k"> </i></span><span style="color:#e5e5e5;font-weight:bold"><i class="k">N</i><i class="k">e</i><i class="k">t</i><i class="k">w</i><i class="k">o</i><i class="k">r</i><i class="k">k</i></span><span style="color:#cccccc"><i class="k">:</i><i class="k"> </i><i class="k">u</i><i class="k">s</i><i class="k">e</i><i class="k"> </i></span><span style="color:#e5e5e5;font-weight:bold"><i class="k">-</i><i class="k">-</i><i class="k">h</i><i class="k">o</i><i class="k">s</i><i class="k">t</i></span><span style="color:#cccccc"><i class="k"> </i><i class="k">t</i><i class="k">o</i><i class="k"> </i><i class="k">e</i><i class="k">x</i><i class="k">p</i><i class="k">o</i><i class="k">s</i><i class="k">e</i></span></div>
<div class="a mono" style="left:369px;top:731px;height:17px;line-height:17px;font-size:12px;color:#cccccc;white-space:pre"><span style="color:#cccccc"><i class="k"> </i><i class="k"> </i><i class="k"> </i><i class="k"> </i><i class="k"> </i></span><span style="color:#e5e5e5;font-weight:bold"><i class="k">V</i><i class="k">u</i><i class="k">e</i><i class="k"> </i><i class="k">D</i><i class="k">e</i><i class="k">v</i><i class="k">T</i><i class="k">o</i><i class="k">o</i><i class="k">l</i><i class="k">s</i></span><span style="color:#cccccc"><i class="k">:</i><i class="k"> </i></span><span style="color:#0dbc79"><i class="k">O</i><i class="k">p</i><i class="k">e</i><i class="k">n</i><i class="k"> </i></span><span style="color:#11a8cd"><i class="k">h</i><i class="k">t</i><i class="k">t</i><i class="k">p</i><i class="k">:</i><i class="k">/</i><i class="k">/</i><i class="k">l</i><i class="k">o</i><i class="k">c</i><i class="k">a</i><i class="k">l</i><i class="k">h</i><i class="k">o</i><i class="k">s</i><i class="k">t</i><i class="k">:</i></span><span style="color:#11a8cd;font-weight:bold"><i class="k">5</i><i class="k">1</i><i class="k">7</i><i class="k">3</i></span><span style="color:#11a8cd"><i class="k">/</i><i class="k">_</i><i class="k">_</i><i class="k">d</i><i class="k">e</i><i class="k">v</i><i class="k">t</i><i class="k">o</i><i class="k">o</i><i class="k">l</i><i class="k">s</i><i class="k">_</i><i class="k">_</i><i class="k">/</i></span><span style="color:#0dbc79"><i class="k"> </i><i class="k">a</i><i class="k">s</i><i class="k"> </i><i class="k">a</i><i class="k"> </i><i class="k">s</i><i class="k">e</i><i class="k">p</i><i class="k">a</i><i class="k">r</i><i class="k">a</i><i class="k">t</i><i class="k">e</i><i class="k"> </i><i class="k">w</i><i class="k">i</i><i class="k">n</i><i class="k">d</i><i class="k">o</i><i class="k">w</i></span></div>
<div class="a mono" style="left:369px;top:748px;height:17px;line-height:17px;font-size:12px;color:#cccccc;white-space:pre"><span style="color:#cccccc"><i class="k"> </i><i class="k"> </i><i class="k"> </i><i class="k"> </i><i class="k"> </i></span><span style="color:#e5e5e5;font-weight:bold"><i class="k">V</i><i class="k">u</i><i class="k">e</i><i class="k"> </i><i class="k">D</i><i class="k">e</i><i class="k">v</i><i class="k">T</i><i class="k">o</i><i class="k">o</i><i class="k">l</i><i class="k">s</i></span><span style="color:#cccccc"><i class="k">:</i><i class="k"> </i></span><span style="color:#0dbc79"><i class="k">P</i><i class="k">r</i><i class="k">e</i><i class="k">s</i><i class="k">s</i><i class="k"> </i></span><span style="color:#e5e510;font-weight:bold"><i class="k">A</i><i class="k">l</i><i class="k">t</i><i class="k">(</i><i class="k"> </i><i class="k">)</i><i class="k">+</i><i class="k">S</i><i class="k">h</i><i class="k">i</i><i class="k">f</i><i class="k">t</i><i class="k">(</i><i class="k"> </i><i class="k">)</i><i class="k">+</i><i class="k">D</i></span><span style="color:#0dbc79"><i class="k"> </i><i class="k">i</i><i class="k">n</i><i class="k"> </i><i class="k">A</i><i class="k">p</i><i class="k">p</i><i class="k"> </i><i class="k">t</i><i class="k">o</i><i class="k"> </i><i class="k">t</i><i class="k">o</i><i class="k">g</i><i class="k">g</i><i class="k">l</i><i class="k">e</i><i class="k"> </i><i class="k">t</i><i class="k">h</i><i class="k">e</i><i class="k"> </i><i class="k">V</i><i class="k">u</i><i class="k">e</i><i class="k"> </i><i class="k">D</i><i class="k">e</i><i class="k">v</i><i class="k">T</i><i class="k">o</i><i class="k">o</i><i class="k">l</i><i class="k">s</i></span></div>
<div class="a mono" style="left:369px;top:765px;height:17px;line-height:17px;font-size:12px;color:#cccccc;white-space:pre"><span style="color:#cccccc"><i class="k"> </i><i class="k"> </i><i class="k"> </i><i class="k"> </i><i class="k"> </i></span><span style="color:#cccccc"><i class="k">p</i><i class="k">r</i><i class="k">e</i><i class="k">s</i><i class="k">s</i><i class="k"> </i></span><span style="color:#e5e5e5;font-weight:bold"><i class="k">h</i><i class="k"> </i><i class="k">+</i><i class="k"> </i><i class="k">e</i><i class="k">n</i><i class="k">t</i><i class="k">e</i><i class="k">r</i></span><span style="color:#cccccc"><i class="k"> </i><i class="k">t</i><i class="k">o</i><i class="k"> </i><i class="k">s</i><i class="k">h</i><i class="k">o</i><i class="k">w</i><i class="k"> </i><i class="k">h</i><i class="k">e</i><i class="k">l</i><i class="k">p</i></span></div>
<div class="a mono" style="left:369px;top:782px;height:17px;line-height:17px;font-size:12px;color:#cccccc;white-space:pre"><span style="color:#cccccc"><i class="k">1</i><i class="k">4</i><i class="k">:</i><i class="k">0</i><i class="k">6</i><i class="k">:</i><i class="k">5</i><i class="k">2</i><i class="k"> </i></span><span style="color:#11a8cd;font-weight:bold"><i class="k">[</i><i class="k">v</i><i class="k">i</i><i class="k">t</i><i class="k">e</i><i class="k">]</i></span><span style="color:#8a8a8a"><i class="k"> </i><i class="k">(</i><i class="k">c</i><i class="k">l</i><i class="k">i</i><i class="k">e</i><i class="k">n</i><i class="k">t</i><i class="k">)</i></span><span style="color:#0dbc79"><i class="k"> </i><i class="k">h</i><i class="k">m</i><i class="k">r</i><i class="k"> </i><i class="k">u</i><i class="k">p</i><i class="k">d</i><i class="k">a</i><i class="k">t</i><i class="k">e</i><i class="k"> </i></span><span style="color:#cccccc"><i class="k">/</i><i class="k">s</i><i class="k">r</i><i class="k">c</i><i class="k">/</i><i class="k">A</i><i class="k">p</i><i class="k">p</i><i class="k">.</i><i class="k">v</i><i class="k">u</i><i class="k">e</i></span></div>
<div class="a" style="left:368px;top:797px;width:7px;height:16px;background:#cccccc"></div>
<svg style="left:651px;top:705px" width="10" height="17" viewBox="0 0 10 17"><path d="M1 0.5 H9 M5 0.5 V16.5 M1 16.5 H9" stroke="#000" stroke-width="2.5"/><path d="M1.5 0.8 H8.5 M5 0.8 V16.2 M1.5 16.2 H8.5" stroke="#fff" stroke-width="1"/></svg>
<div class="a" style="left:1787px;top:559px;width:1px;height:459px;background:#111111"></div>
<div class="a" style="left:1788px;top:559px;width:12px;height:309px;background:#434343"></div>
<div class="a" style="left:1788px;top:559px;width:4px;height:6px;background:#6a6a6a"></div>
<div class="a" style="left:1801px;top:551px;width:1px;height:467px;background:#2b2b2b"></div>
<div class="a" style="left:1801px;top:551px;width:119px;height:22px;background:#37373d"></div>
<div class="a" style="left:1801px;top:551px;width:1px;height:22px;background:#0e5a8f"></div>
<svg style="left:1811px;top:555px" width="16" height="14" viewBox="0 0 16 14"><path d="M1.5 0.8 H15.2 L14.5 13.2 H0.8 Z" stroke="#cccccc" stroke-width="1.2" fill="none"/><path d="M4 3.8 L7.5 6.3 L4 8.8" stroke="#cccccc" stroke-width="1.2" fill="none"/><path d="M7.5 10 H11.5" stroke="#cccccc" stroke-width="1.2"/></svg>
<div class="t" style="left:1831px;top:556px;font-size:13px;color:#cccccc">esbuild</div>
<svg style="left:1811px;top:577px" width="16" height="14" viewBox="0 0 16 14"><path d="M1.5 0.8 H15.2 L14.5 13.2 H0.8 Z" stroke="#cccccc" stroke-width="1.2" fill="none"/><path d="M4 3.8 L7.5 6.3 L4 8.8" stroke="#cccccc" stroke-width="1.2" fill="none"/><path d="M7.5 10 H11.5" stroke="#cccccc" stroke-width="1.2"/></svg>
<div class="t" style="left:1831px;top:578px;font-size:13px;color:#cccccc">powershell</div>

<svg style="left:571.7px;top:752px" width="7" height="10" viewBox="0 0 7 10"><path d="M0.3 2 H2.3 L5 8.5 H7 M4.2 2 H7" stroke="#e5e510" stroke-width="1.3" fill="none"/></svg>
<svg style="left:634.6px;top:751px" width="7" height="11" viewBox="0 0 7 11"><path d="M3.5 0.8 L6.5 4.5 H5 V10 H2 V4.5 H0.5 Z" stroke="#e5e510" stroke-width="1.1" fill="none"/></svg>

<svg style="left:383px;top:698.6px" width="13" height="9" viewBox="0 0 13 9"><path d="M0.3 4.5 H11" stroke="#23d18b" stroke-width="2"/><path d="M7.6 0.9 L11.6 4.5 L7.6 8.1" stroke="#23d18b" stroke-width="2" fill="none"/></svg>
<svg style="left:383px;top:715.6px" width="13" height="9" viewBox="0 0 13 9"><path d="M0.3 4.5 H11" stroke="#23d18b" stroke-width="2"/><path d="M7.6 0.9 L11.6 4.5 L7.6 8.1" stroke="#23d18b" stroke-width="2" fill="none"/></svg>
<svg style="left:383px;top:732.6px" width="13" height="9" viewBox="0 0 13 9"><path d="M0.3 4.5 H11" stroke="#23d18b" stroke-width="2"/><path d="M7.6 0.9 L11.6 4.5 L7.6 8.1" stroke="#23d18b" stroke-width="2" fill="none"/></svg>
<svg style="left:383px;top:749.6px" width="13" height="9" viewBox="0 0 13 9"><path d="M0.3 4.5 H11" stroke="#23d18b" stroke-width="2"/><path d="M7.6 0.9 L11.6 4.5 L7.6 8.1" stroke="#23d18b" stroke-width="2" fill="none"/></svg>
<svg style="left:383px;top:766.6px" width="13" height="9" viewBox="0 0 13 9"><path d="M0.3 4.5 H11" stroke="#23d18b" stroke-width="2"/><path d="M7.6 0.9 L11.6 4.5 L7.6 8.1" stroke="#23d18b" stroke-width="2" fill="none"/></svg>
<!-- STATUS BAR -->
<div class="a" style="left:0;top:1018px;width:1920px;height:1px;background:#2b2b2b"></div>
<div class="a" style="left:0;top:1019px;width:1920px;height:21px;background:#181818"></div>

<div class="a" style="left:0;top:1018px;width:34px;height:22px;background:#0078d4"></div>
<svg style="left:0;top:1015px" width="30" height="25" viewBox="0 0 30 25"><path d="M13 11.25 L16.3 15.1 L13.2 19 M21.5 8 L17.6 11.9 L21.5 15.8" stroke="#ffffff" stroke-width="1.3" fill="none"/></svg>
<svg style="left:42px;top:1022px" width="14" height="14" viewBox="0 0 14 14"><circle cx="7" cy="7" r="6" stroke="#cccccc" stroke-width="1.1" fill="none"/><path d="M4.5 4.5 L9.5 9.5 M9.5 4.5 L4.5 9.5" stroke="#cccccc" stroke-width="1.1"/></svg>
<div class="t" style="left:59px;top:1023.5px;font-size:12px;color:#cccccc">0</div>
<svg style="left:70px;top:1022px" width="13" height="13" viewBox="0 0 13 13"><path d="M6.5 1 L12.3 12 H0.7 Z" stroke="#cccccc" stroke-width="1.1" fill="none" stroke-linejoin="round"/><path d="M6.5 4.8 V8.6 M6.5 9.8 V10.9" stroke="#cccccc" stroke-width="1.2"/></svg>
<div class="t" style="left:86px;top:1023.5px;font-size:12px;color:#cccccc">0</div>
<div class="t" style="left:1556px;top:1023.5px;font-size:12px;color:#cccccc;letter-spacing:-0.2px">Ln 8, Col 1</div>
<div class="t" style="left:1627px;top:1023.5px;font-size:12px;color:#cccccc;letter-spacing:-0.3px">Spaces: 2</div>
<div class="t" style="left:1692px;top:1023.5px;font-size:12px;color:#cccccc">UTF-</div>
<div class="a" style="left:1732px;top:1018px;width:188px;height:22px;background:#ffffff"></div>
<div class="a" style="left:1717px;top:1016px;width:23px;height:23px;background:#ea5a23;border-radius:3px;transform:rotate(-12deg)"></div>
<div class="t" style="left:1721px;top:1017px;font-size:20px;font-weight:bold;color:#fff;font-style:italic">S</div>
<div class="t" style="left:1748px;top:1022px;font-size:14px;font-weight:bold;color:#2f7bd0"><svg style="position:static;display:inline-block;vertical-align:-1px" width="14" height="14" viewBox="0 0 12 12"><path d="M1.5 2H10.5 M3 1V6 M9 1V6 M1 6H11 M2 9H10 M6 4V11.5 M2 11.5H10" stroke="#2f7bd0" stroke-width="1.6" fill="none"/></svg></div>
<div class="a" style="left:1772px;top:1026px;width:3px;height:3px;border-radius:50%;background:#2f7bd0"></div>
<div class="t" style="left:1777px;top:1020px;font-size:14px;font-weight:bold;color:#2f7bd0">,</div>
<svg style="left:1791px;top:1021px" width="16" height="16" viewBox="0 0 16 16"><circle cx="8" cy="8" r="7" stroke="#2f7bd0" stroke-width="1.6" fill="none"/><circle cx="5.5" cy="6" r="1" fill="#2f7bd0"/><circle cx="10.5" cy="6" r="1" fill="#2f7bd0"/><path d="M4.5 9.5 Q8 13 11.5 9.5" stroke="#2f7bd0" stroke-width="1.4" fill="none"/></svg>
<svg style="left:1815px;top:1021px" width="12" height="16" viewBox="0 0 12 16"><rect x="3" y="0" width="6" height="10" rx="3" fill="#2f7bd0"/><path d="M1 7 Q1 12 6 12 Q11 12 11 7 M6 12 V15.5 M3 15.5 H9" stroke="#2f7bd0" stroke-width="1.4" fill="none"/></svg>
<svg style="left:1835px;top:1023px" width="16" height="11" viewBox="0 0 16 11"><rect x="0.8" y="0.8" width="14.4" height="9.4" rx="1" stroke="#2f7bd0" stroke-width="1.6" fill="none"/><path d="M3 3.5 H13 M3 6 H13 M5 8.3 H11" stroke="#2f7bd0" stroke-width="1.2" stroke-dasharray="1.5 0.8"/></svg>
<svg style="left:1859px;top:1021px" width="14" height="16" viewBox="0 0 14 16"><circle cx="6" cy="4" r="3" fill="#b9c2cc"/><path d="M0.5 14 Q0.5 8 6 8 Q11 8 11 14 Z" fill="#b9c2cc"/><rect x="9" y="10" width="4" height="5" fill="#fff" stroke="#8a96a3" stroke-width="0.8"/></svg>
<svg style="left:1881px;top:1022px" width="14" height="14" viewBox="0 0 14 14"><path d="M4 0.5 Q7 2.5 10 0.5 L13.5 3 L12 6 L10.5 5.5 V13.5 H3.5 V5.5 L2 6 L0.5 3 Z" fill="#2f7bd0"/></svg>
<svg style="left:1902px;top:1022px" width="14" height="14" viewBox="0 0 14 14"><rect x="0" y="0" width="6" height="6" fill="#2f7bd0"/><rect x="8" y="0" width="6" height="6" fill="none" stroke="#2f7bd0" stroke-width="1.4"/><rect x="0" y="8" width="6" height="6" fill="#2f7bd0"/><rect x="8" y="8" width="6" height="6" fill="#2f7bd0"/></svg>

<!-- TASKBAR -->
<div class="a" style="left:0;top:1040px;width:1920px;height:40px;background:linear-gradient(90deg,#1f333c 0%,#1e313c 50%,#1b2b3b 100%)"></div>
<svg style="left:16px;top:1052px" width="16" height="16" viewBox="0 0 16 16"><path d="M0 2.3 L6.6 1.4 V7.6 H0 Z M7.4 1.3 L16 0 V7.6 H7.4 Z M0 8.4 H6.6 V14.6 L0 13.7 Z M7.4 8.4 H16 V16 L7.4 14.7 Z" fill="#ffffff"/></svg>
<div class="a" style="left:55px;top:1078px;width:152px;height:2px;background:#8fc0ea"></div>
<div class="a" style="left:216px;top:1078px;width:152px;height:2px;background:#8fc0ea"></div>
<div class="a" style="left:373px;top:1040px;width:160px;height:40px;background:#3a4c55"></div><div class="a" style="left:373px;top:1078px;width:160px;height:2px;background:#8fc0ea"></div>
<div class="a" style="left:538px;top:1078px;width:152px;height:2px;background:#8fc0ea"></div>
<div class="a" style="left:698px;top:1078px;width:152px;height:2px;background:#8fc0ea"></div>
<div class="a" style="left:859px;top:1078px;width:151px;height:2px;background:#8fc0ea"></div>
<svg style="left:64px;top:1050px" width="18" height="20" viewBox="0 0 18 20"><path d="M5.5 0 H12.5 V9 H18 L9 20 L0 9 H5.5 Z" fill="#3d9ae8"/></svg>
<div class="t" style="left:89px;top:1053px;font-size:13px;color:#eeeeee"><svg style="position:static;display:inline-block;vertical-align:-1px" width="12" height="12" viewBox="0 0 12 12"><path d="M1 2.5H11 M6 2.5V11.5 M2.5 7H9.5" stroke="#eeeeee" stroke-width="1.3" fill="none"/></svg><svg style="position:static;display:inline-block;vertical-align:-1px" width="12" height="12" viewBox="0 0 12 12"><path d="M1.5 2H10.5 M3 1V6 M9 1V6 M1 6H11 M2 9H10 M6 4V11.5 M2 11.5H10" stroke="#eeeeee" stroke-width="1.3" fill="none"/></svg></div>
<svg style="left:223px;top:1049px" width="22" height="22" viewBox="0 0 22 22"><circle cx="11" cy="11" r="10.5" fill="#db4437"/><path d="M11 11 L1.9 5.75 A10.5 10.5 0 0 0 11 21.5 Z" fill="#0f9d58"/><path d="M11 11 L11 21.5 A10.5 10.5 0 0 0 20.1 5.75 Z" fill="#f4b400"/><path d="M11 11 L20.1 5.75 L11 5.75 Z" fill="#f4b400"/><circle cx="11" cy="11" r="5" fill="#fff"/><circle cx="11" cy="11" r="3.9" fill="#4285f4"/></svg>
<div class="t" style="left:250px;top:1053px;font-size:13px;color:#eeeeee;letter-spacing:-0.3px"><svg style="position:static;display:inline-block;vertical-align:-1px" width="12" height="12" viewBox="0 0 12 12"><path d="M1.5 1.5V11 M1.5 4H5 M1.5 8H5 M6.5 1.5H11 M6.5 5H11 M8.7 1.5V11.5 M6 8.5L11 11.5" stroke="#eeeeee" stroke-width="1.3" fill="none"/></svg><svg style="position:static;display:inline-block;vertical-align:-1px" width="12" height="12" viewBox="0 0 12 12"><path d="M1.5 2H10.5V6H1.5Z M6 1V11.5 M1 8.5H11 M2.5 11L9.5 11" stroke="#eeeeee" stroke-width="1.3" fill="none"/></svg><svg style="position:static;display:inline-block;vertical-align:-1px" width="12" height="12" viewBox="0 0 12 12"><path d="M1 3H11 M3.5 1V11.5 M8.5 1V11.5 M1 7H11 M1 11H11" stroke="#eeeeee" stroke-width="1.3" fill="none"/></svg>-<svg style="position:static;display:inline-block;vertical-align:-1px" width="12" height="12" viewBox="0 0 12 12"><path d="M2 1.5L4 4 M1 5H4V11 M6 1.5H11V5.5H6Z M6 8H11 M8.5 5.5V11.5" stroke="#eeeeee" stroke-width="1.3" fill="none"/></svg><svg style="position:static;display:inline-block;vertical-align:-1px" width="12" height="12" viewBox="0 0 12 12"><path d="M1.5 1.5H10.5V11H1.5Z M1.5 6H10.5 M6 1.5V11" stroke="#eeeeee" stroke-width="1.3" fill="none"/></svg><svg style="position:static;display:inline-block;vertical-align:-1px" width="12" height="12" viewBox="0 0 12 12"><path d="M1 4H11 M6 1V11.5 M2 11L6 6 L10 11" stroke="#eeeeee" stroke-width="1.3" fill="none"/></svg><svg style="position:static;display:inline-block;vertical-align:-1px" width="12" height="12" viewBox="0 0 12 12"><path d="M1 2.5H11 M6 2.5V11.5 M2.5 7H9.5" stroke="#eeeeee" stroke-width="1.3" fill="none"/></svg><svg style="position:static;display:inline-block;vertical-align:-1px" width="12" height="12" viewBox="0 0 12 12"><path d="M1.5 2H10.5 M3 1V6 M9 1V6 M1 6H11 M2 9H10 M6 4V11.5 M2 11.5H10" stroke="#eeeeee" stroke-width="1.3" fill="none"/></svg>...</div>
<svg style="left:384px;top:1049px" width="23" height="23" viewBox="0 0 100 100"><path d="M71 2 L97 14 V86 L71 98 L28 58 L11 71 L3 67 V33 L11 29 L28 42 Z M71 27 L43 50 L71 73 Z M11 37 V63 L23 50 Z" fill="#1f9cf0" fill-rule="evenodd"/></svg>
<div class="t" style="left:411px;top:1053px;font-size:13px;color:#eeeeee">App.vue - chap2 ...</div>
<div class="a" style="left:543px;top:1050px;width:23px;height:19px;background:#0c0c0c;border:1px solid #9a9a9a"></div>
<div class="a" style="left:544px;top:1051px;width:21px;height:3px;background:#dcdcdc"></div>
<div class="t" style="left:546px;top:1056px;font-size:5px;color:#ddd;font-family:'Liberation Mono'">C:\_</div>
<div class="t" style="left:571px;top:1053px;font-size:13px;color:#eeeeee;letter-spacing:-0.3px"><svg style="position:static;display:inline-block;vertical-align:-1px" width="12" height="12" viewBox="0 0 12 12"><path d="M1.5 1.5V11 M1.5 4H5 M1.5 8H5 M6.5 1.5H11 M6.5 5H11 M8.7 1.5V11.5 M6 8.5L11 11.5" stroke="#eeeeee" stroke-width="1.3" fill="none"/></svg><svg style="position:static;display:inline-block;vertical-align:-1px" width="12" height="12" viewBox="0 0 12 12"><path d="M1.5 2H10.5V6H1.5Z M6 1V11.5 M1 8.5H11 M2.5 11L9.5 11" stroke="#eeeeee" stroke-width="1.3" fill="none"/></svg><svg style="position:static;display:inline-block;vertical-align:-1px" width="12" height="12" viewBox="0 0 12 12"><path d="M1 3H11 M3.5 1V11.5 M8.5 1V11.5 M1 7H11 M1 11H11" stroke="#eeeeee" stroke-width="1.3" fill="none"/></svg><svg style="position:static;display:inline-block;vertical-align:-1px" width="12" height="12" viewBox="0 0 12 12"><path d="M2 1.5L4 4 M1 5H4V11 M6 1.5H11V5.5H6Z M6 8H11 M8.5 5.5V11.5" stroke="#eeeeee" stroke-width="1.3" fill="none"/></svg><svg style="position:static;display:inline-block;vertical-align:-1px" width="12" height="12" viewBox="0 0 12 12"><path d="M1.5 1.5H10.5V11H1.5Z M1.5 6H10.5 M6 1.5V11" stroke="#eeeeee" stroke-width="1.3" fill="none"/></svg>: C:\Wi...</div>
<div class="a" style="left:715px;top:1050px;width:13px;height:20px;background:#f4f4f4;border-radius:1px"></div><div class="a" style="left:717px;top:1053px;width:9px;height:2px;background:#d24726"></div><div class="a" style="left:717px;top:1057px;width:9px;height:2px;background:#d24726"></div><div class="a" style="left:706px;top:1051px;width:14px;height:18px;background:#d24726;border-radius:1px"></div><div class="t" style="left:708.5px;top:1054px;font-size:12px;font-weight:bold;color:#fff">P</div>
<div class="t" style="left:732px;top:1053px;font-size:13px;color:#eeeeee;letter-spacing:-0.3px">vuejs3.x-<svg style="position:static;display:inline-block;vertical-align:-1px" width="12" height="12" viewBox="0 0 12 12"><path d="M1 4H11 M6 1V11.5 M2 11L6 6 L10 11" stroke="#eeeeee" stroke-width="1.3" fill="none"/></svg>2<svg style="position:static;display:inline-block;vertical-align:-1px" width="12" height="12" viewBox="0 0 12 12"><path d="M1 2.5H11 M6 2.5V11.5 M2.5 7H9.5" stroke="#eeeeee" stroke-width="1.3" fill="none"/></svg>Vue...</div>
<div class="a" style="left:875px;top:1050px;width:13px;height:20px;background:#f4f4f4;border-radius:1px"></div><div class="a" style="left:877px;top:1053px;width:9px;height:2px;background:#d24726"></div><div class="a" style="left:877px;top:1057px;width:9px;height:2px;background:#d24726"></div><div class="a" style="left:866px;top:1051px;width:14px;height:18px;background:#d24726;border-radius:1px"></div><div class="t" style="left:868.5px;top:1054px;font-size:12px;font-weight:bold;color:#fff">P</div>
<div class="t" style="left:892px;top:1053px;font-size:13px;color:#eeeeee;letter-spacing:-0.2px">V4.4.1 - PowerPoi...</div>
<svg style="left:1572px;top:1052px" width="16" height="16" viewBox="0 0 16 16"><circle cx="8" cy="8" r="7.5" fill="#f5a03a"/><circle cx="3" cy="3" r="2.5" fill="#f5a03a"/><circle cx="13" cy="3" r="2.5" fill="#f5a03a"/><circle cx="3" cy="13" r="2.5" fill="#f5a03a"/><circle cx="13" cy="13" r="2.5" fill="#f5a03a"/><circle cx="8" cy="8" r="4.5" fill="#ffe2b0"/><path d="M5.5 8.5 Q8 11 10.5 8.5" stroke="#e07b1a" stroke-width="1.2" fill="none"/></svg>
<svg style="left:1643px;top:1053px" width="18" height="15" viewBox="0 0 18 15"><rect x="3.5" y="2.5" width="14" height="9" stroke="#ffffff" stroke-width="1.2" fill="none"/><rect x="0.5" y="0.5" width="4" height="4" stroke="#ffffff" stroke-width="1" fill="#1b2b3b"/><path d="M10.5 11.5 V14 M6 14.5 H15" stroke="#fff" stroke-width="1.2"/></svg>
<svg style="left:1693px;top:1052px" width="16" height="16" viewBox="0 0 16 16"><rect x="0" y="0" width="15" height="15" fill="#e8eef2"/><path d="M2 4 Q8 2 12 8 Q10 6 6 8" stroke="#3f6c8a" stroke-width="1.3" fill="none"/><circle cx="12.5" cy="12.5" r="3.5" fill="#36a852"/><path d="M11.5 10.8 L14 12.5 L11.5 14.2 Z" fill="#fff"/></svg>
<div class="t" style="left:1740px;top:1053px;font-size:14px;color:#ffffff"><svg style="position:static;display:inline-block;vertical-align:-1px" width="14" height="14" viewBox="0 0 12 12"><path d="M1.5 1.5V11 M1.5 4H5 M1.5 8H5 M6.5 1.5H11 M6.5 5H11 M8.7 1.5V11.5 M6 8.5L11 11.5" stroke="#ffffff" stroke-width="1.1" fill="none"/></svg></div>
<div class="a" style="left:1768px;top:1053px;width:16px;height:15px;background:#e4572e;border-radius:2px;transform:rotate(-12deg)"></div>
<div class="t" style="left:1771px;top:1053px;font-size:13px;font-weight:bold;font-style:italic;color:#fff">S</div>
<div class="t" style="left:1815px;top:1045px;font-size:12px;color:#ffffff">14:22</div>
<div class="t" style="left:1804px;top:1064px;font-size:12px;color:#ffffff">2025/3/3</div>
<svg style="left:1878px;top:1051px" width="18" height="17" viewBox="0 0 18 17"><path d="M0.7 0.7 H17.3 V12.3 H11 L9 15.5 L7 12.3 H0.7 Z" stroke="#ffffff" stroke-width="1.2" fill="none" stroke-linejoin="round"/></svg>
<div class="a" style="left:1915px;top:1040px;width:1px;height:40px;background:#5a6a78"></div>

</body></html>
